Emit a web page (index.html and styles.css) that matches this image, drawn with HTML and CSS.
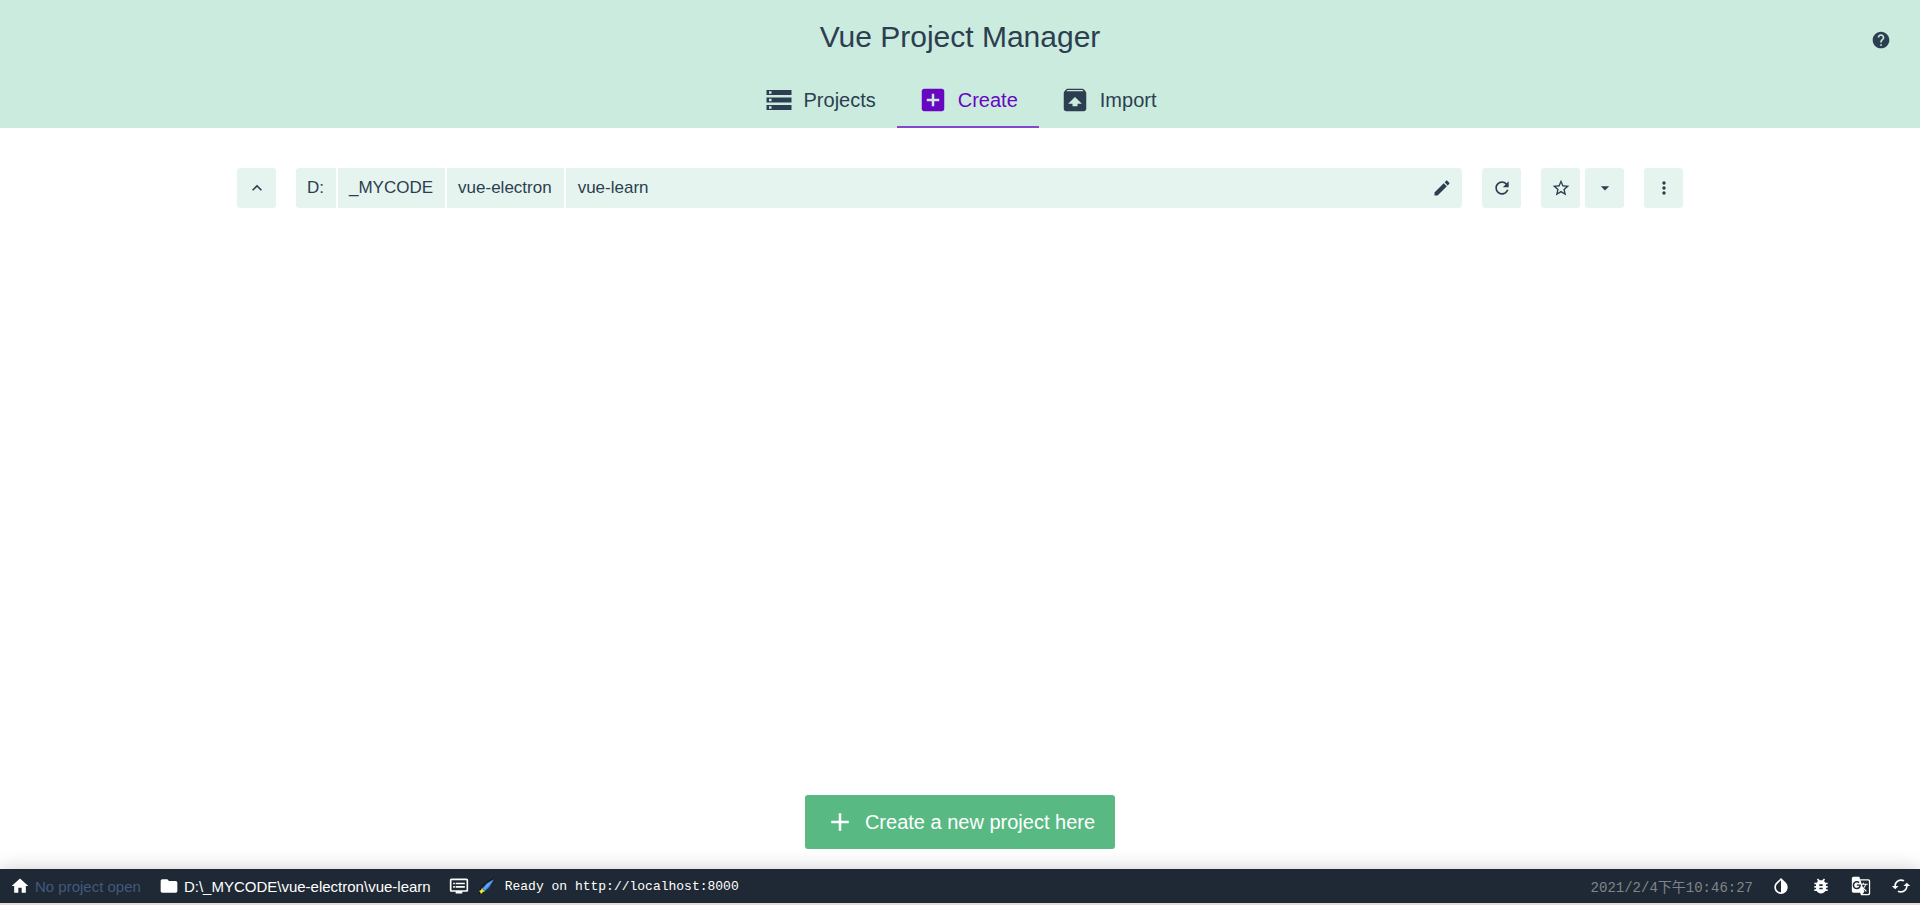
FILE: index.html
```
<!DOCTYPE html>
<html lang="en">
<head>
    <meta charset="UTF-8">
    <meta name="viewport" content="width=device-width, initial-scale=1.0">
    <title>Vue Project Manager</title>
    <link rel="stylesheet" href="styles.css">
</head>
<body>
    <header class="header">
        <h1>Vue Project Manager</h1>
        <button class="help" aria-label="Help">
            <svg class="icon" viewBox="0 0 24 24"><path d="M12 2C6.48 2 2 6.48 2 12s4.48 10 10 10 10-4.48 10-10S17.52 2 12 2zm1 17h-2v-2h2v2zm2.07-7.75l-.9.92C13.45 12.9 13 13.5 13 15h-2v-.5c0-1.1.45-2.1 1.17-2.83l1.24-1.26c.37-.36.59-.86.59-1.41 0-1.1-.9-2-2-2s-2 .9-2 2H8c0-2.21 1.79-4 4-4s4 1.79 4 4c0 .88-.36 1.68-.93 2.25z"/></svg>
        </button>
        <nav class="tabs">
            <a class="tab" href="#projects">
                <svg class="icon-big" viewBox="0 0 24 24"><path d="M2 20h20v-4H2v4zm2-3h2v2H4v-2zM2 4v4h20V4H2zm4 3H4V5h2v2zm-4 7h20v-4H2v4zm2-3h2v2H4v-2z"/></svg>
                Projects
            </a>
            <a class="tab active" href="#create">
                <svg class="icon-big" viewBox="0 0 24 24"><path d="M19 3H5c-1.11 0-2 .9-2 2v14c0 1.1.89 2 2 2h14c1.1 0 2-.9 2-2V5c0-1.1-.9-2-2-2zm-2 10h-4v4h-2v-4H7v-2h4V7h2v4h4v2z"/></svg>
                Create
            </a>
            <a class="tab" href="#import">
                <svg class="icon-big" viewBox="0 0 24 24"><path d="M20.55 5.22l-1.39-1.68C18.88 3.21 18.47 3 18 3H6c-.47 0-.88.21-1.15.55L3.46 5.22C3.17 5.57 3 6.01 3 6.5V19c0 1.1.89 2 2 2h14c1.1 0 2-.9 2-2V6.5c0-.49-.17-.93-.45-1.28zM12 9.5l5.5 5.5H14v2h-4v-2H6.5L12 9.5zM5.12 5l.82-1h12l.93 1H5.12z"/></svg>
                Import
            </a>
        </nav>
    </header>

    <main class="content">
        <div class="toolbar">
            <button class="tool" aria-label="Parent folder">
                <svg class="icon" viewBox="0 0 24 24"><path d="M7.41 15.41L12 10.83l4.59 4.58L18 14l-6-6-6 6z"/></svg>
            </button>
            <div class="path">
                <button class="folder">D:</button>
                <button class="folder">_MYCODE</button>
                <button class="folder">vue-electron</button>
                <button class="folder last">vue-learn</button>
                <button class="edit" aria-label="Edit path">
                    <svg class="icon" viewBox="0 0 24 24"><path d="M3 17.25V21h3.75L17.81 9.94l-3.75-3.75L3 17.25zM20.71 7.04c.39-.39.39-1.02 0-1.41l-2.34-2.34c-.39-.39-1.02-.39-1.41 0l-1.83 1.83 3.75 3.75 1.83-1.83z"/></svg>
                </button>
            </div>
            <button class="tool" aria-label="Refresh">
                <svg class="icon" viewBox="0 0 24 24"><path d="M17.65 6.35C16.2 4.9 14.21 4 12 4c-4.42 0-7.99 3.58-7.99 8s3.57 8 7.99 8c3.73 0 6.84-2.55 7.73-6h-2.08c-.82 2.33-3.04 4-5.65 4-3.31 0-6-2.69-6-6s2.69-6 6-6c1.66 0 3.14.69 4.22 1.78L13 11h7V4l-2.35 2.35z"/></svg>
            </button>
            <div class="group">
                <button class="tool" aria-label="Add to favorites">
                    <svg class="icon" viewBox="0 0 24 24"><path d="M22 9.24l-7.19-.62L12 2 9.19 8.63 2 9.24l5.46 4.73L5.82 21 12 17.27 18.18 21l-1.63-7.03L22 9.24zM12 15.4l-3.76 2.27 1-4.28-3.32-2.88 4.38-.38L12 6.1l1.71 4.04 4.38.38-3.32 2.88 1 4.28L12 15.4z"/></svg>
                </button>
                <button class="tool" aria-label="Favorites">
                    <svg class="icon" viewBox="0 0 24 24"><path d="M7 10l5 5 5-5z"/></svg>
                </button>
            </div>
            <button class="tool" aria-label="More">
                <svg class="icon" viewBox="0 0 24 24"><path d="M12 8c1.1 0 2-.9 2-2s-.9-2-2-2-2 .9-2 2 .9 2 2 2zm0 2c-1.1 0-2 .9-2 2s.9 2 2 2 2-.9 2-2-.9-2-2-2zm0 6c-1.1 0-2 .9-2 2s.9 2 2 2 2-.9 2-2-.9-2-2-2z"/></svg>
            </button>
        </div>
        <button class="create">
            <svg class="icon-big" viewBox="0 0 24 24"><path d="M19 13h-6v6h-2v-6H5v-2h6V5h2v6h6v2z"/></svg>
            Create a new project here
        </button>
    </main>

    <footer class="status">
        <a class="item home" href="#home">
            <svg class="icon" viewBox="0 0 24 24"><path d="M10 20v-6h4v6h5v-8h3L12 3 2 12h3v8z"/></svg>
            No project open
        </a>
        <a class="item" href="#folder">
            <svg class="icon" viewBox="0 0 24 24"><path d="M10 4H4c-1.1 0-1.99.9-1.99 2L2 18c0 1.1.9 2 2 2h16c1.1 0 2-.9 2-2V8c0-1.1-.9-2-2-2h-8l-2-2z"/></svg>
            D:\_MYCODE\vue-electron\vue-learn
        </a>
        <div class="item log">
            <svg class="icon" viewBox="0 0 24 24"><path d="M21 3H3c-1.1 0-2 .9-2 2v12c0 1.1.9 2 2 2h5v2h8v-2h5c1.1 0 1.99-.9 1.99-2L23 5c0-1.1-.9-2-2-2zm0 14H3V5h18v12zm-2-9H8v2h11V8zm0 4H8v2h11v-2zM7 8H5v2h2V8zm0 4H5v2h2v-2z"/></svg>
            <svg class="comet" viewBox="0 0 16 16">
                <path fill="#0b1017" d="M15 0L9 3 3 8l-3 5v3l4-1 6-5 3-5z"/>
                <path fill="#2f6fc0" d="M15 1L8 5 3 10l-1 3 3 1 5-4 3-5z"/>
                <path fill="#62a7ef" d="M14 2L8 6l-4 5 2 1 4-4z"/>
                <path fill="#f4e52b" d="M3 10l1 2 2 1-2 1-2 2-1-2-1-1 2-1z"/>
            </svg>
            <span>Ready on http://localhost:8000</span>
        </div>
        <time class="date">2021/2/4下午10:46:27</time>
        <div class="actions">
            <button aria-label="Toggle dark mode">
                <svg class="icon" viewBox="0 0 24 24"><path d="M17.66 7.93L12 2.27 6.34 7.93c-3.12 3.12-3.12 8.19 0 11.31C7.9 20.8 9.95 21.58 12 21.58s4.1-.78 5.66-2.34c3.12-3.12 3.12-8.19 0-11.31zM12 19.59c-1.6 0-3.11-.62-4.24-1.76C6.62 16.69 6 15.19 6 13.59s.62-3.11 1.76-4.24L12 5.1v14.49z"/></svg>
            </button>
            <button aria-label="Report a bug">
                <svg class="icon" viewBox="0 0 24 24"><path d="M20 8h-2.81c-.45-.78-1.07-1.45-1.82-1.96L17 4.41 15.59 3l-2.17 2.17C12.96 5.06 12.49 5 12 5s-.96.06-1.41.17L8.41 3 7 4.41l1.62 1.63C7.88 6.55 7.26 7.22 6.81 8H4v2h2.09c-.05.33-.09.66-.09 1v1H4v2h2v1c0 .34.04.67.09 1H4v2h2.81c1.04 1.79 2.97 3 5.19 3s4.15-1.21 5.19-3H20v-2h-2.09c.05-.33.09-.66.09-1v-1h2v-2h-2v-1c0-.34-.04-.67-.09-1H20V8zm-6 8h-4v-2h4v2zm0-4h-4v-2h4v2z"/></svg>
            </button>
            <button aria-label="Translate">
                <svg class="icon" viewBox="0 0 24 24"><path d="M21 4H11l-1-3H3c-1.1 0-2 .9-2 2v15c0 1.1.9 2 2 2h8l1 3h9c1.1 0 2-.9 2-2V6c0-1.1-.9-2-2-2zM7 16c-2.76 0-5-2.24-5-5s2.24-5 5-5c1.35 0 2.48.5 3.35 1.3L9.03 8.57c-.38-.36-1.04-.78-2.03-.78-1.74 0-3.15 1.44-3.15 3.21S5.26 14.21 7 14.21c2.01 0 2.84-1.44 2.92-2.41H7v-1.71h4.68c.07.31.12.61.12 1.02C11.8 13.97 9.89 16 7 16zm6.17-5.42h3.7c-.43 1.25-1.11 2.43-2.05 3.47-.31-.35-.6-.72-.86-1.1l-.79-2.37zm8.33 9.92c0 .55-.45 1-1 1H14l2-2.5-1.04-3.1 3.1 3.1.92-.92-3.3-3.25.02-.02c1.13-1.25 1.93-2.69 2.4-4.22H20v-1.3h-4.53V8h-1.29v1.29h-1.44L11.46 5.5h9.04c.55 0 1 .45 1 1v14z"/></svg>
            </button>
            <button aria-label="Reset">
                <svg class="icon" viewBox="0 0 24 24"><path d="M19 8l-4 4h3c0 3.31-2.69 6-6 6-1.01 0-1.97-.25-2.8-.7l-1.46 1.46C8.97 19.54 10.43 20 12 20c4.42 0 8-3.58 8-8h3l-4-4zM6 12c0-3.31 2.69-6 6-6 1.01 0 1.97.25 2.8.7l1.46-1.46C15.03 4.46 13.57 4 12 4c-4.42 0-8 3.58-8 8H1l4 4 4-4H6z"/></svg>
            </button>
        </div>
    </footer>
</body>
</html>
```
FILE: styles.css
```
* {
    box-sizing: border-box;
}

body {
    margin: 0;
    min-height: 100vh;
    display: flex;
    flex-direction: column;
    font-family: "Liberation Sans", Arial, sans-serif;
    font-size: 17px;
    color: #2c3e50;
    background-color: #fff;
}

button {
    font: inherit;
    color: inherit;
    border: none;
    padding: 0;
    cursor: pointer;
    background: none;
}

a {
    color: inherit;
    text-decoration: none;
}

svg {
    display: block;
    flex: none;
    fill: currentColor;
}

.icon {
    width: 20px;
    height: 20px;
}

.icon-big {
    width: 30px;
    height: 30px;
}

/* header */
.header {
    position: relative;
    background-color: #cbebdf;
    text-align: center;
}

.header h1 {
    margin: 0;
    padding: 16px 0;
    font-size: 30px;
    font-weight: 300;
    line-height: 42px;
}

.help {
    position: absolute;
    top: 30px;
    right: 29px;
}

.tabs {
    display: flex;
    justify-content: center;
}

.tab {
    display: flex;
    align-items: center;
    gap: 10px;
    height: 54px;
    padding: 0 21px;
    font-size: 20px;
    border-bottom: 2px solid transparent;
}

.tab.active {
    color: #6806c1;
    border-bottom-color: #8548cd;
}

/* folder explorer */
.content {
    flex: 1;
    display: flex;
    flex-direction: column;
    justify-content: space-between;
    align-items: center;
    padding: 40px 16px 20px;
}

.toolbar {
    display: flex;
    gap: 20px;
    width: 100%;
    max-width: 1446px;
}

.tool {
    display: flex;
    align-items: center;
    justify-content: center;
    width: 39px;
    height: 40px;
    border-radius: 3px;
    background-color: #e5f4ef;
}

.group {
    display: flex;
    gap: 5px;
}

.path {
    flex: 1;
    display: flex;
    gap: 2px;
    height: 40px;
    border-radius: 3px;
    overflow: hidden;
}

.folder {
    padding: 0 12px 0 11px;
    background-color: #e5f4ef;
}

.folder.last {
    flex: 1;
    padding-left: 12px;
    text-align: left;
}

.edit {
    width: 40px;
    padding: 0 10px;
    margin-left: -2px;
    background-color: #e5f4ef;
}

.create {
    display: flex;
    align-items: center;
    gap: 10px;
    height: 54px;
    padding: 0 20px;
    font-size: 20px;
    color: #fff;
    border-radius: 3px;
    background-color: #58b983;
}

/* status bar */
.status {
    display: flex;
    align-items: center;
    height: 36px;
    padding: 0 9px 0 10px;
    font-size: 15px;
    color: #fff;
    background-color: #1f2935;
    border-bottom: 2px solid #ead8d2;
    box-shadow: 0 0 20px rgba(0, 0, 0, 0.2);
}

.item {
    display: flex;
    align-items: center;
    gap: 5px;
    margin-right: 18px;
}

.home {
    color: #42597d;
}

.home .icon {
    color: #fff;
}

.log {
    gap: 10px;
    flex: 1;
}

.log,
.date {
    font-family: "Liberation Mono", "Noto Sans CJK SC", monospace;
    font-size: 13px;
}

.comet {
    width: 16px;
    height: 16px;
}

.date {
    margin-right: 18px;
    font-size: 14px;
    color: #7f858c;
}

.actions {
    display: flex;
    gap: 20px;
}
```
